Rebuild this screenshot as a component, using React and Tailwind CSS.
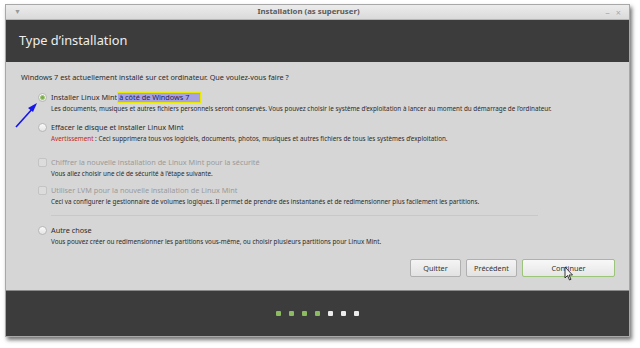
import React from "react";

function Radio({ checked }) {
  return (
    <div className="w-[9px] h-[9px] rounded-full shrink-0 flex items-center justify-center bg-gradient-to-b from-[#fafafa] to-[#e4e4e4] border border-[#b8b8b8]">
      {checked && <div className="w-[5px] h-[5px] rounded-full bg-[#7bab4f] border border-[#9cc76f]" />}
    </div>
  );
}

function Check() {
  return <div className="w-[9px] h-[9px] rounded-[2px] shrink-0 border border-[#c4c4c4] bg-[#dcdcdc]" />;
}

export default function App() {
  const font = { fontFamily: '"Noto Sans", "Open Sans", sans-serif' };
  return (
    <div className="w-[640px] h-[348px] bg-white relative overflow-hidden" style={font}>
      <div className="absolute left-[5px] top-[4px] w-[625px] flex flex-col border border-[#a8a8a8] shadow-[2px_3px_4px_rgba(0,0,0,0.55)]">
        {/* title bar */}
        <div className="h-[15px] bg-gradient-to-b from-[#ececec] to-[#dadada] flex items-center pl-[8px] pr-[8px] text-[#5a5a5a] border-b border-[#b5b5b5]">
          <span className="text-[7px] text-[#999] w-[20px]">▼</span>
          <div className="flex-1 text-center text-[7.8px] font-bold leading-none pr-[18px]">Installation (as superuser)</div>
          <div className="w-[20px] flex justify-end gap-[6px] text-[9px] text-[#aaa] leading-none">
            <span>–</span>
            <span>×</span>
          </div>
        </div>
        {/* header */}
        <div className="h-[42px] bg-[#3c3c3c] flex items-center pl-[13px] text-[#eeeeee] text-[12.8px]">
          Type d’installation
        </div>
        {/* content */}
        <div className="h-[228px] bg-[#d6d6d6] flex flex-col pl-[15px] pr-[14px] pt-[9px] text-[#2b2b2b]">
          <div className="h-[12px] leading-[12px] text-[7.3px]">
            Windows 7 est actuellement installé sur cet ordinateur. Que voulez-vous faire ?
          </div>
          {/* option 1 */}
          <div className="mt-[8px] flex items-center gap-[4px] pl-[17px] h-[12px]">
            <Radio checked />
            <span className="text-[7.3px] leading-[12px] whitespace-nowrap">
              Installer Linux Mint
              <span className="inline-block bg-[#a8a2e2] border-[1.5px] border-[#e8e800] leading-[9px] px-[1px] text-[#1e1e5a]">à côté de Windows 7&nbsp;&nbsp;&nbsp;&nbsp;&nbsp;</span>
            </span>
          </div>
          <div className="h-[12px] leading-[12px] text-[6.3px] pl-[30px] whitespace-nowrap">
            Les documents, musiques et autres fichiers personnels seront conservés. Vous pouvez choisir le système d’exploitation à lancer au moment du démarrage de l’ordinateur.
          </div>
          {/* option 2 */}
          <div className="mt-[6px] flex items-center gap-[4px] pl-[17px] h-[12px]">
            <Radio />
            <span className="text-[7.3px] leading-[12px]">Effacer le disque et installer Linux Mint</span>
          </div>
          <div className="h-[12px] leading-[12px] text-[6.3px] pl-[30px] whitespace-nowrap">
            <span className="text-[#c0281e]">Avertissement</span> : Ceci supprimera tous vos logiciels, documents, photos, musiques et autres fichiers de tous les systèmes d’exploitation.
          </div>
          {/* option 3 */}
          <div className="mt-[11px] flex items-center gap-[4px] pl-[17px] h-[12px]">
            <Check />
            <span className="text-[7.3px] leading-[12px] text-[#9a9a9a]">Chiffrer la nouvelle installation de Linux Mint pour la sécurité</span>
          </div>
          <div className="h-[11px] leading-[11px] text-[6.3px] pl-[30px] whitespace-nowrap">
            Vous allez choisir une clé de sécurité à l’étape suivante.
          </div>
          {/* option 4 */}
          <div className="mt-[5px] flex items-center gap-[4px] pl-[17px] h-[12px]">
            <Check />
            <span className="text-[7.3px] leading-[12px] text-[#9a9a9a]">Utiliser LVM pour la nouvelle installation de Linux Mint</span>
          </div>
          <div className="h-[12px] leading-[12px] text-[6.3px] pl-[30px] whitespace-nowrap">
            Ceci va configurer le gestionnaire de volumes logiques. Il permet de prendre des instantanés et de redimensionner plus facilement les partitions.
          </div>
          {/* separator */}
          <div className="mt-[7px] ml-[30px] w-[487px] h-px bg-[#c8c8c8]" />
          {/* option 5 */}
          <div className="mt-[8px] flex items-center gap-[4px] pl-[17px] h-[12px]">
            <Radio />
            <span className="text-[7.3px] leading-[12px]">Autre chose</span>
          </div>
          <div className="h-[12px] leading-[12px] text-[6.3px] pl-[30px] whitespace-nowrap">
            Vous pouvez créer ou redimensionner les partitions vous-même, ou choisir plusieurs partitions pour Linux Mint.
          </div>
          {/* buttons */}
          <div className="mt-[11px] flex justify-end gap-[5px]">
            <div className="w-[51px] h-[18px] rounded-[2px] border border-[#b0b0b0] bg-gradient-to-b from-[#f4f4f4] to-[#e2e2e2] flex items-center justify-center text-[7.3px] text-[#333]">Quitter</div>
            <div className="w-[51px] h-[18px] rounded-[2px] border border-[#b0b0b0] bg-gradient-to-b from-[#f4f4f4] to-[#e2e2e2] flex items-center justify-center text-[7.3px] text-[#333]">Précédent</div>
            <div className="w-[93px] h-[18px] rounded-[2px] border border-[#9cc47a] bg-gradient-to-b from-[#f8f8f8] to-[#e6e6e6] flex items-center justify-center text-[7.3px] text-[#333]">Continuer</div>
          </div>
        </div>
        {/* footer */}
        <div className="h-[46px] bg-[#3c3c3c] border-t border-[#8a8a8a] flex items-center justify-center gap-[8px]">
          {[0, 1, 2, 3].map((i) => (
            <div key={i} className="w-[5px] h-[5px] rounded-[1px] bg-[#8dbb62]" />
          ))}
          {[0, 1, 2].map((i) => (
            <div key={"w" + i} className="w-[5px] h-[5px] rounded-[1px] bg-[#ececec]" />
          ))}
        </div>
      </div>
      {/* blue arrow annotation */}
      <svg className="absolute left-0 top-0" width="640" height="348" viewBox="0 0 640 348">
        <line x1="16" y1="127" x2="34" y2="107" stroke="#1515ee" strokeWidth="1.6" />
        <polygon points="37,103 28,108 33,112" fill="#1515ee" />
      </svg>
      {/* mouse cursor */}
      <svg className="absolute left-[564px] top-[266px]" width="10" height="15" viewBox="0 0 10 15">
        <path d="M1 1 L1 12 L3.5 9.5 L5.5 14 L7 13.3 L5 9 L8.5 9 Z" fill="#f2f2f2" stroke="#222" strokeWidth="0.9" strokeLinejoin="round" />
      </svg>
    </div>
  );
}
